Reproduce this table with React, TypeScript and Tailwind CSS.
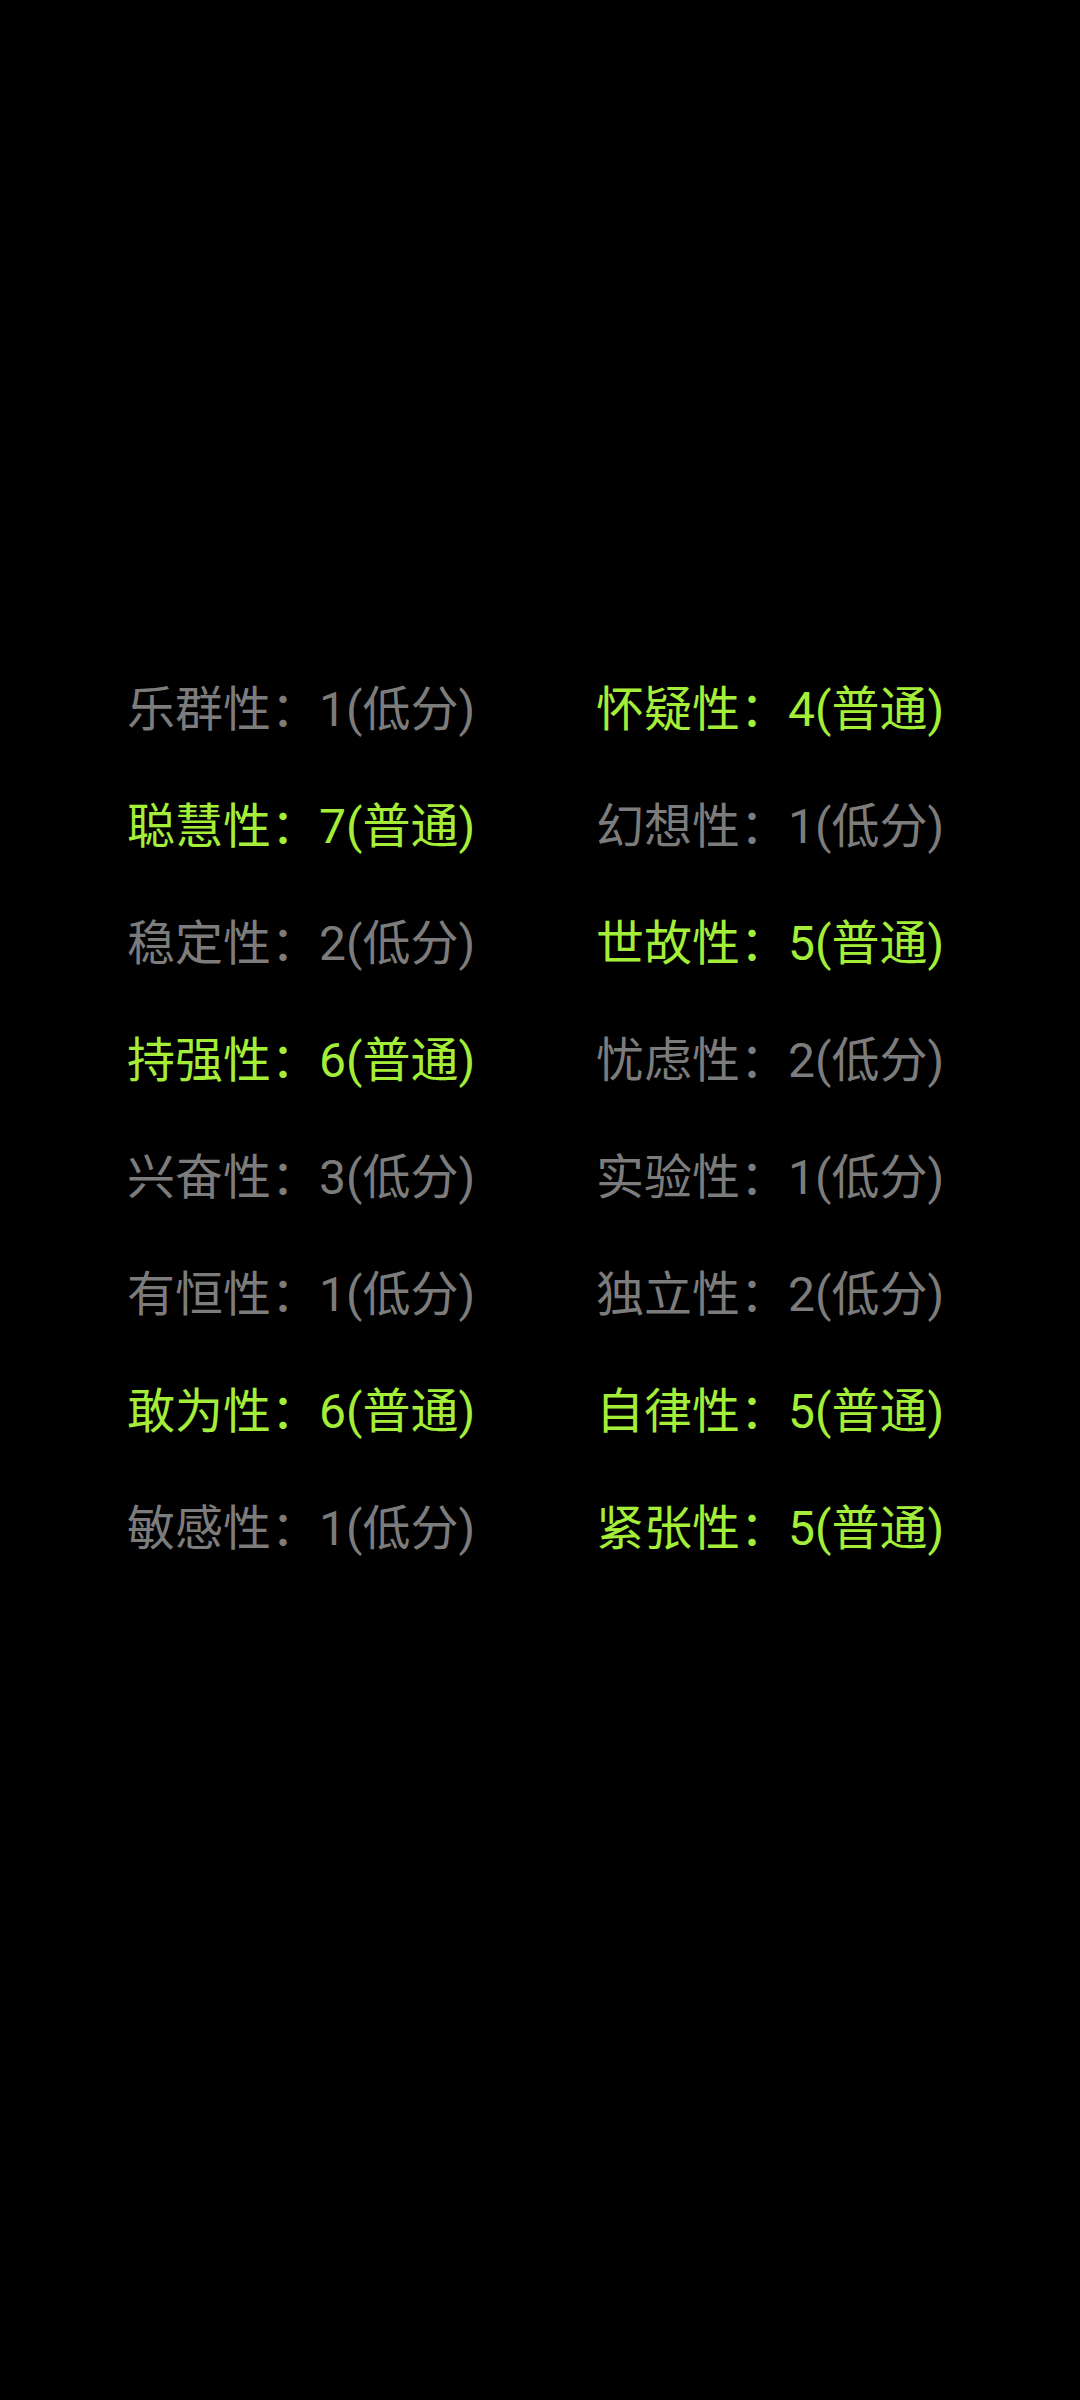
const left = [
  ["乐群性", 1, "低分"],
  ["聪慧性", 7, "普通"],
  ["稳定性", 2, "低分"],
  ["持强性", 6, "普通"],
  ["兴奋性", 3, "低分"],
  ["有恒性", 1, "低分"],
  ["敢为性", 6, "普通"],
  ["敏感性", 1, "低分"],
] as const;

const right = [
  ["怀疑性", 4, "普通"],
  ["幻想性", 1, "低分"],
  ["世故性", 5, "普通"],
  ["忧虑性", 2, "低分"],
  ["实验性", 1, "低分"],
  ["独立性", 2, "低分"],
  ["自律性", 5, "普通"],
  ["紧张性", 5, "普通"],
] as const;

function Trait({ name, score, level }: { name: string; score: number; level: string }) {
  const high = level === "普通";
  return (
    <div className={`flex h-[117px] items-center whitespace-nowrap ${high ? "text-[#a4ee3a]" : "text-[#7c7c7c]"}`}>
      {name}：{score}({level})
    </div>
  );
}

export default function App() {
  return (
    <div
      className="min-h-[2400px] w-[1080px] bg-black pt-[651px] pl-[127px] text-[48px]"
      style={{ fontFamily: 'Roboto, "Noto Sans CJK SC", sans-serif' }}
    >
      <div className="grid grid-cols-[469px_auto]">
        {left.map((l, i) => (
          <>
            <Trait key={`l${i}`} name={l[0]} score={l[1]} level={l[2]} />
            <Trait key={`r${i}`} name={right[i][0]} score={right[i][1]} level={right[i][2]} />
          </>
        ))}
      </div>
    </div>
  );
}
